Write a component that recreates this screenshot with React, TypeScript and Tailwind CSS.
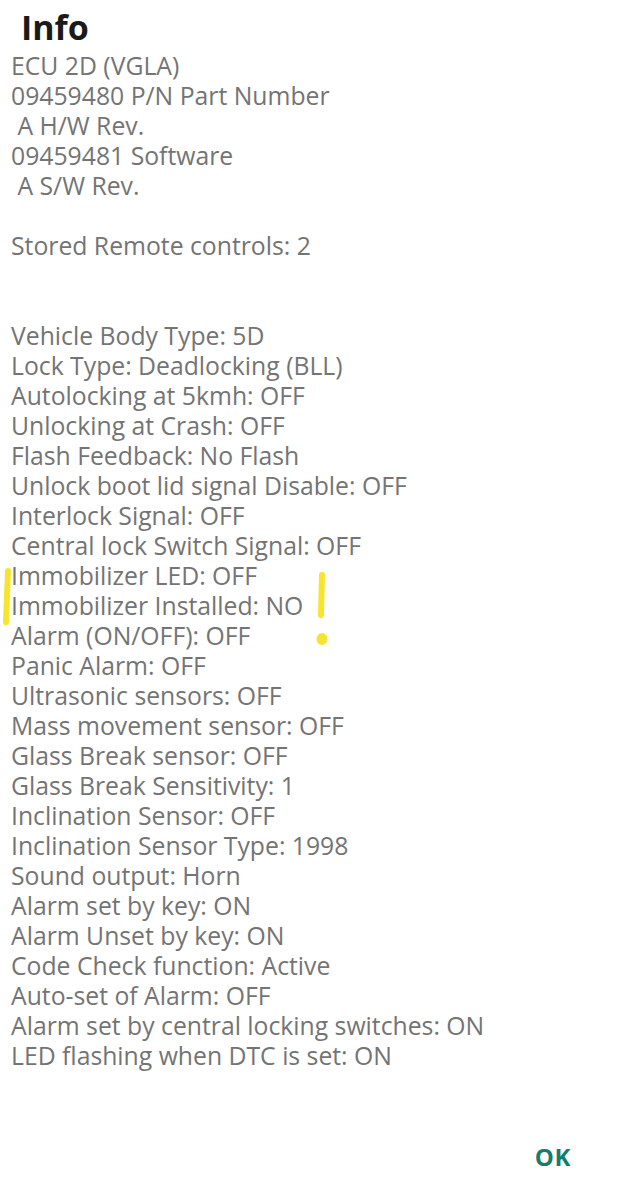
import React from 'react'

const lines: string[] = [
  'ECU 2D (VGLA)',
  '09459480 P/N Part Number',
  ' A H/W Rev.',
  '09459481 Software',
  ' A S/W Rev.',
  '',
  'Stored Remote controls: 2',
  '',
  '',
  'Vehicle Body Type: 5D',
  'Lock Type: Deadlocking (BLL)',
  'Autolocking at 5kmh: OFF',
  'Unlocking at Crash: OFF',
  'Flash Feedback: No Flash',
  'Unlock boot lid signal Disable: OFF',
  'Interlock Signal: OFF',
  'Central lock Switch Signal: OFF',
  'Immobilizer LED: OFF',
  'Immobilizer Installed: NO',
  'Alarm (ON/OFF): OFF',
  'Panic Alarm: OFF',
  'Ultrasonic sensors: OFF',
  'Mass movement sensor: OFF',
  'Glass Break sensor: OFF',
  'Glass Break Sensitivity: 1',
  'Inclination Sensor: OFF',
  'Inclination Sensor Type: 1998',
  'Sound output: Horn',
  'Alarm set by key: ON',
  'Alarm Unset by key: ON',
  'Code Check function: Active',
  'Auto-set of Alarm: OFF',
  'Alarm set by central locking switches: ON',
  'LED flashing when DTC is set: ON',
]

export default function App() {
  return (
    <div className="relative w-[626px] h-[1200px] bg-white overflow-hidden font-['Open_Sans',sans-serif]">
      <h1 className="pl-[21px] pt-[7px] text-[34px] leading-[40px] font-bold text-[#1a1a1a]">Info</h1>
      <div className="mt-[4px] pl-[11px] text-[24.75px] leading-[30px] text-[#747474] whitespace-pre">
        {lines.map((l, i) => (
          <div key={i} className="h-[30px]">{l}</div>
        ))}
      </div>
      <div className="flex justify-end pr-[55px] mt-[68px]">
        <button className="text-[24px] font-bold text-[#147d6f] tracking-wide">OK</button>
      </div>

      {/* highlighter marks */}
      <svg className="absolute left-0 top-0 pointer-events-none" width="626" height="1200">
        <path d="M8 571 L6 622" stroke="#f6e52c" strokeWidth="6" strokeLinecap="round" fill="none" />
        <path d="M322 575 L321 615" stroke="#f6e52c" strokeWidth="6" strokeLinecap="round" fill="none" />
        <ellipse cx="322" cy="639" rx="5.5" ry="6" fill="#f6e52c" />
      </svg>
    </div>
  )
}
